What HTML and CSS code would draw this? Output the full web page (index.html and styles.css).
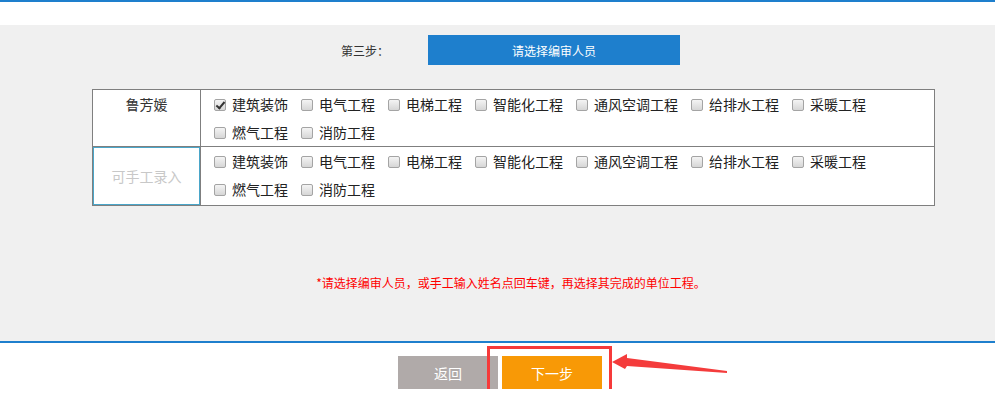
FILE: index.html
```html
<!DOCTYPE html>
<html lang="zh-CN">
<head>
<meta charset="utf-8">
<title>第三步</title>
<link rel="stylesheet" href="styles.css">
</head>
<body>
<div class="topline"></div>
<div class="main">
  <div class="content">
    <div class="step-row">
      <span class="step-label">第三步：</span>
      <button class="step-btn" type="button">请选择编审人员</button>
    </div>
    <table class="staff">
      <tr>
        <td class="name-cell">鲁芳媛</td>
        <td class="opts-cell">
          <div class="opts">
            <label class="opt"><input type="checkbox" checked><span>建筑装饰</span></label>
            <label class="opt"><input type="checkbox"><span>电气工程</span></label>
            <label class="opt"><input type="checkbox"><span>电梯工程</span></label>
            <label class="opt"><input type="checkbox"><span>智能化工程</span></label>
            <label class="opt"><input type="checkbox"><span>通风空调工程</span></label>
            <label class="opt"><input type="checkbox"><span>给排水工程</span></label>
            <label class="opt"><input type="checkbox"><span>采暖工程</span></label>
            <label class="opt"><input type="checkbox"><span>燃气工程</span></label>
            <label class="opt"><input type="checkbox"><span>消防工程</span></label>
          </div>
        </td>
      </tr>
      <tr>
        <td class="input-cell"><input class="name-input" type="text" placeholder="可手工录入"></td>
        <td class="opts-cell">
          <div class="opts">
            <label class="opt"><input type="checkbox"><span>建筑装饰</span></label>
            <label class="opt"><input type="checkbox"><span>电气工程</span></label>
            <label class="opt"><input type="checkbox"><span>电梯工程</span></label>
            <label class="opt"><input type="checkbox"><span>智能化工程</span></label>
            <label class="opt"><input type="checkbox"><span>通风空调工程</span></label>
            <label class="opt"><input type="checkbox"><span>给排水工程</span></label>
            <label class="opt"><input type="checkbox"><span>采暖工程</span></label>
            <label class="opt"><input type="checkbox"><span>燃气工程</span></label>
            <label class="opt"><input type="checkbox"><span>消防工程</span></label>
          </div>
        </td>
      </tr>
    </table>
    <p class="note">*请选择编审人员，或手工输入姓名点回车键，再选择其完成的单位工程。</p>
  </div>
</div>
<div class="actions">
  <button class="btn btn-back" type="button">返回</button>
  <button class="btn btn-next" type="button">下一步</button>
</div>
<div class="highlight"></div>
<svg class="arrow" width="120" height="30" viewBox="0 0 120 30">
  <polygon points="2,14 17,6 17,10 117,23 117,25 17,18 15,21" fill="#f43c3c"/>
</svg>
</body>
</html>
```

FILE: styles.css
```css
* { box-sizing: border-box; }

body {
  position: relative;
  margin: 0;
  background: #fff;
  font-family: "Noto Sans CJK SC", "Microsoft YaHei", sans-serif;
  color: #333;
}

.topline {
  height: 2px;
  background: #1e7fcd;
}

.main {
  margin-top: 23px;
  height: 318px;
  background: #f0f0f0;
  border-bottom: 2px solid #1e7fcd;
}

.content {
  margin-left: 92px;
  width: 843px;
  padding-top: 10px;
}

.step-row {
  display: flex;
  align-items: center;
  padding-left: 249px;
}

.step-label {
  width: 87px;
  font-size: 12px;
  color: #333;
}

.step-btn {
  width: 252px;
  height: 30px;
  border: 0;
  background: #1e7fcd;
  color: #fff;
  font-family: inherit;
  font-size: 12px;
  padding: 0;
}

.staff {
  margin-top: 24px;
  width: 843px;
  border-collapse: collapse;
  background: #fff;
}

.staff td {
  border: 1px solid #7f7f7f;
  padding: 0;
  vertical-align: top;
}

.name-cell {
  width: 108px;
  height: 57px;
  text-align: center;
  font-size: 14px;
  line-height: 28px;
  color: #333;
}

.input-cell {
  width: 108px;
  height: 59px;
}

.name-input {
  display: block;
  width: 107px;
  height: 58px;
  border: 1px solid #4aa6c9;
  outline: none;
  padding: 0;
  text-align: center;
  font-family: inherit;
  font-size: 14px;
  color: #333;
  background: #fff;
}

.name-input::placeholder {
  color: #c8c8c8;
}

.opts {
  display: flex;
  flex-wrap: wrap;
  padding-left: 9px;
}

.opt {
  display: flex;
  align-items: center;
  height: 28px;
  font-size: 14px;
  color: #222;
  margin-right: 9px;
}

.opt input {
  appearance: none;
  -webkit-appearance: none;
  position: relative;
  width: 12px;
  height: 12px;
  margin: 2px 6px 0 4px;
  border: 1px solid #a4a4a4;
  border-radius: 2px;
  background: linear-gradient(#f4f4f4, #d6d6d6);
}

.opt input:checked::after {
  content: "";
  position: absolute;
  left: 3px;
  top: 0px;
  width: 3px;
  height: 7px;
  border: solid #333;
  border-width: 0 2px 2px 0;
  transform: rotate(40deg);
}

.note {
  margin: 67px 0 0;
  padding-right: 5px;
  text-align: center;
  font-size: 12px;
  line-height: 20px;
  color: #ff0000;
}

.actions {
  display: flex;
  justify-content: center;
  gap: 4px;
  padding: 13px 0 0 5px;
}

.btn {
  width: 100px;
  height: 33px;
  border: 0;
  padding: 0;
  color: #fff;
  font-family: inherit;
  font-size: 14px;
}

.btn-back { background: #b0aaa9; }
.btn-next { background: #f89906; }

.highlight {
  position: absolute;
  left: 487px;
  top: 346px;
  width: 125px;
  height: 52px;
  border: 3px solid #f63a3a;
}

.arrow {
  position: absolute;
  left: 610px;
  top: 348px;
}
```
